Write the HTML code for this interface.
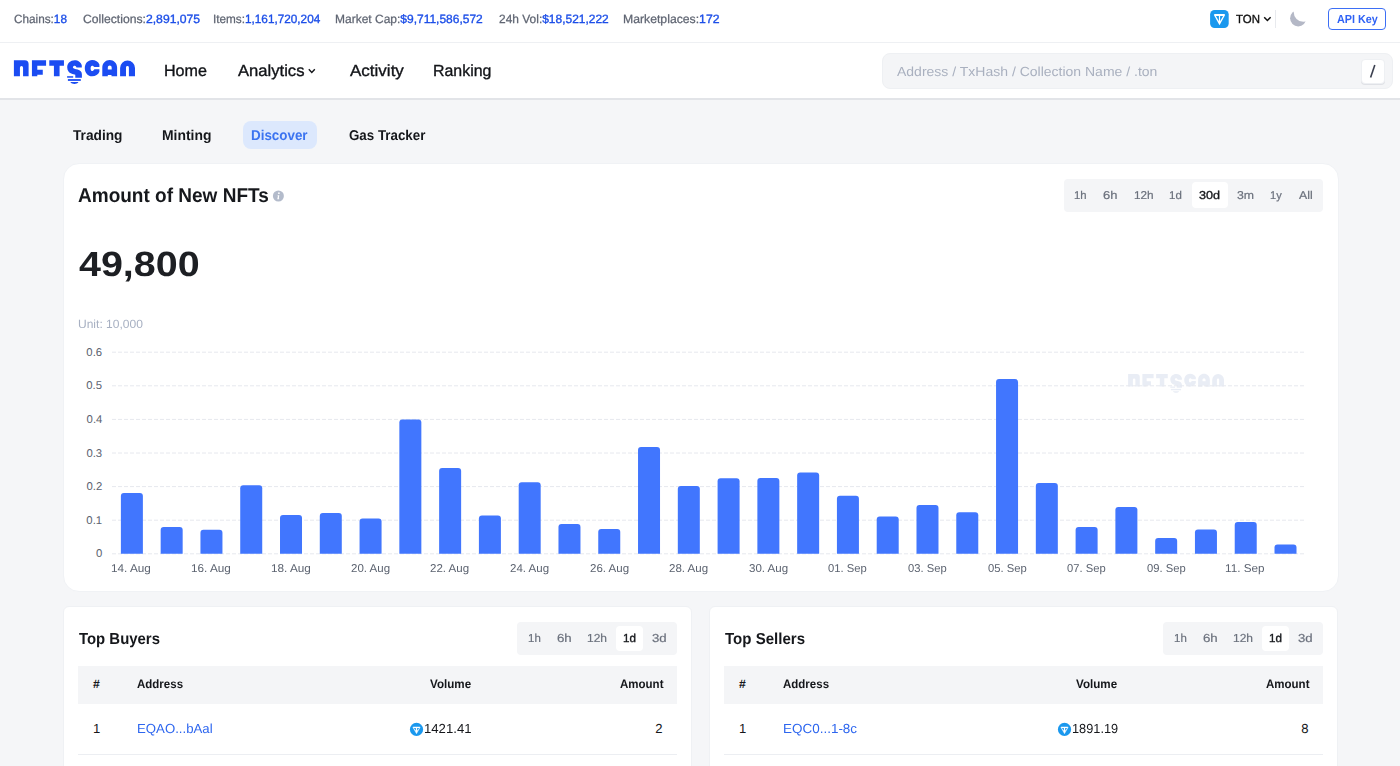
<!DOCTYPE html>
<html><head><meta charset="utf-8"><style>
html,body{margin:0;padding:0;}
body{width:1400px;height:766px;overflow:hidden;position:relative;background:#f5f6f8;font-family:"Liberation Sans",sans-serif;}
.tx{position:absolute;line-height:1;white-space:nowrap;text-rendering:geometricPrecision;}
.box{position:absolute;box-sizing:border-box;}
svg{position:absolute;left:0;top:0;overflow:visible;}
</style></head><body>
<div class="box" style="left:0;top:0;width:1400px;height:42px;background:#fff"></div>
<div class="box" style="left:0;top:42px;width:1400px;height:1px;background:#eef0f3"></div>
<div class="box" style="left:0;top:43px;width:1400px;height:55px;background:#fff"></div>
<div class="box" style="left:0;top:98px;width:1400px;height:1.5px;background:#e2e4e8"></div>
<div class="box" style="left:881.8px;top:52.6px;width:510.8px;height:36.4px;background:#f4f5f7;border:1px solid #eef0f3;border-radius:8px"></div>
<div class="box" style="left:1361.4px;top:59.4px;width:23.2px;height:24.3px;background:#fff;border:1px solid #eef0f3;border-radius:4px;box-shadow:0 1px 0 #dfe1e6"></div>
<div class="box" style="left:1328px;top:7.9px;width:58px;height:22.1px;border:1px solid #3d6ff5;border-radius:4px"></div>
<div class="box" style="left:1275px;top:9.9px;width:1px;height:18px;background:#e8eaee"></div>
<div class="box" style="left:242.6px;top:121.1px;width:74.5px;height:27.8px;background:#dce8fd;border-radius:8px"></div>
<div class="box" style="left:62.8px;top:163.2px;width:1275.9px;height:428.9px;background:#fff;border-radius:16px;border:1px solid #f0f2f5"></div>
<div class="box" style="left:1064.1px;top:179.1px;width:259.3px;height:32.8px;background:#f4f5f7;border-radius:4px"></div>
<div class="box" style="left:1191.6px;top:182.3px;width:36.1px;height:25.7px;background:#fff;border-radius:4px"></div>

<div class="box" style="left:62.6px;top:606.3px;width:629.9px;height:200px;background:#fff;border-radius:6px;border:1px solid #eff1f4"></div>
<div class="box" style="left:517.3px;top:622.2px;width:160.1px;height:32.8px;background:#f4f5f7;border-radius:4px"></div>
<div class="box" style="left:615.9px;top:625.5px;width:27px;height:25.9px;background:#fff;border-radius:4px"></div>
<div class="box" style="left:78px;top:666.4px;width:599.4px;height:37.4px;background:#f4f5f7"></div>
<div class="box" style="left:78px;top:754px;width:599.4px;height:1px;background:#eceef2"></div>


<div class="box" style="left:708.6px;top:606.3px;width:629.9px;height:200px;background:#fff;border-radius:6px;border:1px solid #eff1f4"></div>
<div class="box" style="left:1163.3px;top:622.2px;width:160.1px;height:32.8px;background:#f4f5f7;border-radius:4px"></div>
<div class="box" style="left:1261.9px;top:625.5px;width:27px;height:25.9px;background:#fff;border-radius:4px"></div>
<div class="box" style="left:724px;top:666.4px;width:599.4px;height:37.4px;background:#f4f5f7"></div>
<div class="box" style="left:724px;top:754px;width:599.4px;height:1px;background:#eceef2"></div>

<svg width="1400" height="766" viewBox="0 0 1400 766">
<defs>
<mask id="moon"><rect x="1280" y="0" width="40" height="40" fill="#fff"/><circle cx="1303.3" cy="12.1" r="9.6" fill="#000"/></mask></defs>
<g fill="#1b4cf2">
<path d="M13.9,76.15 V60.2 H24.8 A3.8,3.8 0 0 1 28.6,64 V76.15 H23.06 V67.63 A1.565,1.565 0 0 0 19.93,67.63 V76.15 Z"/>
<path d="M31.93,76.15 V60.2 H46.08 V65.64 H37.29 V69.63 H42.77 V74.86 H37.29 V76.15 Z"/>
<path d="M49.29,60.2 H63.95 V65.77 H59.58 V76.15 H53.92 V65.77 H49.29 Z"/>
<path d="M81.8,65.5 C81.0,62.3 78.2,60.3 74.6,60.3 C70.4,60.3 67.2,63.3 67.2,67.2 C67.2,70.3 68.9,72.6 71.3,73.6 C72.8,74.2 74.5,74.5 75.3,74.8 V77.8 H81.9 V74.2 C81.9,71.6 80.2,70.2 77.6,69.4 L75.0,68.9 C73.6,68.6 72.9,68.0 72.9,67.3 C72.9,66.4 73.8,65.8 74.7,65.8 C75.6,65.8 76.1,66.5 76.5,67.6 H81.8 Z"/>
<rect x="67.1" y="76.2" width="6.1" height="1.5"/>
<rect x="67.9" y="79.1" width="12.9" height="1.8"/>
<path d="M70.3,82 H78.5 C77.5,83.5 76,83.9 74.4,83.9 C72.8,83.9 71.3,83.5 70.3,82 Z"/>
<path d="M99.4,64.6 C98.2,61.8 95.5,60.1 92.1,60.1 C87.9,60.1 84.8,63.7 84.8,68.2 C84.8,72.7 87.9,76.3 92.1,76.3 C95.5,76.3 98.2,74.6 99.4,71.8 V69.2 H94.4 C93.6,70.3 93.0,71.0 92.2,71.0 C91.2,71.0 90.6,69.7 90.6,68.4 C90.6,67.1 91.2,65.8 92.2,65.8 C93.0,65.8 93.6,66.4 94.4,67.1 H99.4 Z"/>
<path fill-rule="evenodd" d="M102.3,76.3 V67.5 C102.3,63.4 105.6,60.1 109.7,60.1 C113.8,60.1 117.1,63.4 117.1,67.5 V76.3 H111.5 V75.0 H107.8 V76.3 Z M107.8,69.5 V67.8 C107.8,66.5 108.7,65.6 109.75,65.6 C110.8,65.6 111.7,66.5 111.7,67.8 V69.5 Z"/>
<path d="M120.1,76.2 V67.95 A7.45,7.45 0 0 1 135,67.95 V76.2 H128.9 V67.45 A1.45,1.45 0 0 0 126,67.45 V76.2 Z"/>
</g>
<g fill="#e9edf5" transform="translate(1117.1,326.2) scale(0.792)">
<path d="M13.9,76.15 V60.2 H24.8 A3.8,3.8 0 0 1 28.6,64 V76.15 H23.06 V67.63 A1.565,1.565 0 0 0 19.93,67.63 V76.15 Z"/>
<path d="M31.93,76.15 V60.2 H46.08 V65.64 H37.29 V69.63 H42.77 V74.86 H37.29 V76.15 Z"/>
<path d="M49.29,60.2 H63.95 V65.77 H59.58 V76.15 H53.92 V65.77 H49.29 Z"/>
<path d="M81.8,65.5 C81.0,62.3 78.2,60.3 74.6,60.3 C70.4,60.3 67.2,63.3 67.2,67.2 C67.2,70.3 68.9,72.6 71.3,73.6 C72.8,74.2 74.5,74.5 75.3,74.8 V77.8 H81.9 V74.2 C81.9,71.6 80.2,70.2 77.6,69.4 L75.0,68.9 C73.6,68.6 72.9,68.0 72.9,67.3 C72.9,66.4 73.8,65.8 74.7,65.8 C75.6,65.8 76.1,66.5 76.5,67.6 H81.8 Z"/>
<rect x="67.1" y="76.2" width="6.1" height="1.5"/>
<rect x="67.9" y="79.1" width="12.9" height="1.8"/>
<path d="M70.3,82 H78.5 C77.5,83.5 76,83.9 74.4,83.9 C72.8,83.9 71.3,83.5 70.3,82 Z"/>
<path d="M99.4,64.6 C98.2,61.8 95.5,60.1 92.1,60.1 C87.9,60.1 84.8,63.7 84.8,68.2 C84.8,72.7 87.9,76.3 92.1,76.3 C95.5,76.3 98.2,74.6 99.4,71.8 V69.2 H94.4 C93.6,70.3 93.0,71.0 92.2,71.0 C91.2,71.0 90.6,69.7 90.6,68.4 C90.6,67.1 91.2,65.8 92.2,65.8 C93.0,65.8 93.6,66.4 94.4,67.1 H99.4 Z"/>
<path fill-rule="evenodd" d="M102.3,76.3 V67.5 C102.3,63.4 105.6,60.1 109.7,60.1 C113.8,60.1 117.1,63.4 117.1,67.5 V76.3 H111.5 V75.0 H107.8 V76.3 Z M107.8,69.5 V67.8 C107.8,66.5 108.7,65.6 109.75,65.6 C110.8,65.6 111.7,66.5 111.7,67.8 V69.5 Z"/>
<path d="M120.1,76.2 V67.95 A7.45,7.45 0 0 1 135,67.95 V76.2 H128.9 V67.45 A1.45,1.45 0 0 0 126,67.45 V76.2 Z"/>
</g>
<g stroke="#e6e8ee" stroke-width="1" stroke-dasharray="4,2"><line x1="112" x2="1305" y1="553.8" y2="553.8"/><line x1="112" x2="1305" y1="520.2" y2="520.2"/><line x1="112" x2="1305" y1="486.6" y2="486.6"/><line x1="112" x2="1305" y1="453.0" y2="453.0"/><line x1="112" x2="1305" y1="419.4" y2="419.4"/><line x1="112" x2="1305" y1="385.8" y2="385.8"/><line x1="112" x2="1305" y1="352.2" y2="352.2"/></g>
<g fill="#4176fe"><path d="M120.89,553.8 V496.00 Q120.89,493.00 123.89,493.00 H139.89 Q142.89,493.00 142.89,496.00 V553.8 Z"/><path d="M160.67,553.8 V530.00 Q160.67,527.00 163.67,527.00 H179.67 Q182.67,527.00 182.67,530.00 V553.8 Z"/><path d="M200.45,553.8 V532.80 Q200.45,529.80 203.45,529.80 H219.45 Q222.45,529.80 222.45,532.80 V553.8 Z"/><path d="M240.23,553.8 V488.30 Q240.23,485.30 243.23,485.30 H259.23 Q262.23,485.30 262.23,488.30 V553.8 Z"/><path d="M280.01,553.8 V518.00 Q280.01,515.00 283.01,515.00 H299.01 Q302.01,515.00 302.01,518.00 V553.8 Z"/><path d="M319.79,553.8 V516.10 Q319.79,513.10 322.79,513.10 H338.79 Q341.79,513.10 341.79,516.10 V553.8 Z"/><path d="M359.57,553.8 V521.40 Q359.57,518.40 362.57,518.40 H378.57 Q381.57,518.40 381.57,521.40 V553.8 Z"/><path d="M399.35,553.8 V422.40 Q399.35,419.40 402.35,419.40 H418.35 Q421.35,419.40 421.35,422.40 V553.8 Z"/><path d="M439.13,553.8 V471.10 Q439.13,468.10 442.13,468.10 H458.13 Q461.13,468.10 461.13,471.10 V553.8 Z"/><path d="M478.91,553.8 V518.40 Q478.91,515.40 481.91,515.40 H497.91 Q500.91,515.40 500.91,518.40 V553.8 Z"/><path d="M518.69,553.8 V485.30 Q518.69,482.30 521.69,482.30 H537.69 Q540.69,482.30 540.69,485.30 V553.8 Z"/><path d="M558.47,553.8 V526.90 Q558.47,523.90 561.47,523.90 H577.47 Q580.47,523.90 580.47,526.90 V553.8 Z"/><path d="M598.25,553.8 V532.10 Q598.25,529.10 601.25,529.10 H617.25 Q620.25,529.10 620.25,532.10 V553.8 Z"/><path d="M638.03,553.8 V450.10 Q638.03,447.10 641.03,447.10 H657.03 Q660.03,447.10 660.03,450.10 V553.8 Z"/><path d="M677.81,553.8 V488.90 Q677.81,485.90 680.81,485.90 H696.81 Q699.81,485.90 699.81,488.90 V553.8 Z"/><path d="M717.59,553.8 V481.20 Q717.59,478.20 720.59,478.20 H736.59 Q739.59,478.20 739.59,481.20 V553.8 Z"/><path d="M757.37,553.8 V481.00 Q757.37,478.00 760.37,478.00 H776.37 Q779.37,478.00 779.37,481.00 V553.8 Z"/><path d="M797.15,553.8 V475.50 Q797.15,472.50 800.15,472.50 H816.15 Q819.15,472.50 819.15,475.50 V553.8 Z"/><path d="M836.93,553.8 V498.70 Q836.93,495.70 839.93,495.70 H855.93 Q858.93,495.70 858.93,498.70 V553.8 Z"/><path d="M876.71,553.8 V519.40 Q876.71,516.40 879.71,516.40 H895.71 Q898.71,516.40 898.71,519.40 V553.8 Z"/><path d="M916.49,553.8 V508.10 Q916.49,505.10 919.49,505.10 H935.49 Q938.49,505.10 938.49,508.10 V553.8 Z"/><path d="M956.27,553.8 V515.20 Q956.27,512.20 959.27,512.20 H975.27 Q978.27,512.20 978.27,515.20 V553.8 Z"/><path d="M996.05,553.8 V382.10 Q996.05,379.10 999.05,379.10 H1015.05 Q1018.05,379.10 1018.05,382.10 V553.8 Z"/><path d="M1035.83,553.8 V486.10 Q1035.83,483.10 1038.83,483.10 H1054.83 Q1057.83,483.10 1057.83,486.10 V553.8 Z"/><path d="M1075.61,553.8 V530.10 Q1075.61,527.10 1078.61,527.10 H1094.61 Q1097.61,527.10 1097.61,530.10 V553.8 Z"/><path d="M1115.39,553.8 V509.90 Q1115.39,506.90 1118.39,506.90 H1134.39 Q1137.39,506.90 1137.39,509.90 V553.8 Z"/><path d="M1155.17,553.8 V541.00 Q1155.17,538.00 1158.17,538.00 H1174.17 Q1177.17,538.00 1177.17,541.00 V553.8 Z"/><path d="M1194.95,553.8 V532.40 Q1194.95,529.40 1197.95,529.40 H1213.95 Q1216.95,529.40 1216.95,532.40 V553.8 Z"/><path d="M1234.73,553.8 V524.90 Q1234.73,521.90 1237.73,521.90 H1253.73 Q1256.73,521.90 1256.73,524.90 V553.8 Z"/><path d="M1274.51,553.8 V547.40 Q1274.51,544.40 1277.51,544.40 H1293.51 Q1296.51,544.40 1296.51,547.40 V553.8 Z"/></g>
<path d="M308.8,69.2 L311.8,72.4 L314.8,69.2" fill="none" stroke="#121418" stroke-width="1.4"/>
<path d="M1264.2,17.2 L1267.4,20.5 L1270.6,17.2" fill="none" stroke="#111" stroke-width="1.5"/>
<circle cx="1298.2" cy="18.3" r="8.1" fill="#b4b8c6" mask="url(#moon)"/>
<rect x="1210.1" y="9.9" width="18.6" height="18.2" rx="4.5" fill="#1a98ee"/>
<path d="M1213.9,15.1 Q1213.9,14.0 1215.0,14.0 H1224.0 Q1225.1,14.0 1225.1,15.1 L1219.5,25.3 Z" fill="#fff"/>
<path d="M1215.9,16.0 H1218.9 V21.3 Z M1220.1,16.0 H1223.1 L1220.1,21.3 Z" fill="#1a98ee"/>
<line x1="1374.8" y1="65" x2="1370.6" y2="77.4" stroke="#3b4050" stroke-width="1.6"/>
<circle cx="278.4" cy="196" r="5.5" fill="#b3bbcb"/>
<path d="M277.6,195.2 H279.3 L278.8,198.6 H279.2 V199.2 H277.3 L277.9,196.0 H277.6 Z" fill="#fff"/><circle cx="278.9" cy="193.2" r="0.85" fill="#fff"/>
<circle cx="416.5" cy="729.4" r="6.6" fill="#1a98ee"/><path d="M412.90,727.10 H420.10 L416.50,733.60 Z" fill="#fff" stroke="#fff" stroke-width="0.6" stroke-linejoin="round"/><path d="M413.90,727.90 H415.85 V730.80 Z M417.15,727.90 H419.10 L417.15,730.80 Z" fill="#1a98ee"/>
<circle cx="1064.5" cy="729.4" r="6.6" fill="#1a98ee"/><path d="M1060.90,727.10 H1068.10 L1064.50,733.60 Z" fill="#fff" stroke="#fff" stroke-width="0.6" stroke-linejoin="round"/><path d="M1061.90,727.90 H1063.85 V730.80 Z M1065.15,727.90 H1067.10 L1065.15,730.80 Z" fill="#1a98ee"/>
</svg>
<div id="tb1" class="tx" style="left:14.14px;top:12.81px;font-size:12px;font-weight:400;color:#606673;letter-spacing:0.000px;transform:scaleX(0.9797);transform-origin:0 0;-webkit-text-stroke:0.25px currentColor;"><span style="color:#606673">Chains:</span><span style="color:#1d4fe8;-webkit-text-stroke:0.35px currentColor">18</span></div>
<div id="tb2" class="tx" style="left:82.56px;top:12.81px;font-size:12px;font-weight:400;color:#606673;letter-spacing:0.000px;transform:scaleX(1.0149);transform-origin:0 0;-webkit-text-stroke:0.25px currentColor;"><span style="color:#606673">Collections:</span><span style="color:#1d4fe8;-webkit-text-stroke:0.35px currentColor">2,891,075</span></div>
<div id="tb3" class="tx" style="left:213.34px;top:12.81px;font-size:12px;font-weight:400;color:#606673;letter-spacing:0.000px;transform:scaleX(0.9800);transform-origin:0 0;-webkit-text-stroke:0.25px currentColor;"><span style="color:#606673">Items:</span><span style="color:#1d4fe8;-webkit-text-stroke:0.35px currentColor">1,161,720,204</span></div>
<div id="tb4" class="tx" style="left:335.37px;top:12.81px;font-size:12px;font-weight:400;color:#606673;letter-spacing:0.000px;transform:scaleX(0.9993);transform-origin:0 0;-webkit-text-stroke:0.25px currentColor;"><span style="color:#606673">Market Cap:</span><span style="color:#1d4fe8;-webkit-text-stroke:0.35px currentColor">$9,711,586,572</span></div>
<div id="tb5" class="tx" style="left:498.52px;top:12.81px;font-size:12px;font-weight:400;color:#606673;letter-spacing:0.000px;transform:scaleX(0.9963);transform-origin:0 0;-webkit-text-stroke:0.25px currentColor;"><span style="color:#606673">24h Vol:</span><span style="color:#1d4fe8;-webkit-text-stroke:0.35px currentColor">$18,521,222</span></div>
<div id="tb6" class="tx" style="left:622.76px;top:12.81px;font-size:12px;font-weight:400;color:#606673;letter-spacing:0.000px;transform:scaleX(1.0189);transform-origin:0 0;-webkit-text-stroke:0.25px currentColor;"><span style="color:#606673">Marketplaces:</span><span style="color:#1d4fe8;-webkit-text-stroke:0.35px currentColor">172</span></div>
<div id="nv1" class="tx" style="left:164.36px;top:62.91px;font-size:16.1px;font-weight:400;color:#121418;letter-spacing:0.000px;transform:scaleX(0.9996);transform-origin:0 0;-webkit-text-stroke:0.35px currentColor;">Home</div>
<div id="nv2" class="tx" style="left:237.54px;top:62.91px;font-size:16.1px;font-weight:400;color:#121418;letter-spacing:0.000px;transform:scaleX(1.0320);transform-origin:0 0;-webkit-text-stroke:0.35px currentColor;">Analytics</div>
<div id="nv3" class="tx" style="left:349.64px;top:62.91px;font-size:16.1px;font-weight:400;color:#121418;letter-spacing:0.000px;transform:scaleX(1.0570);transform-origin:0 0;-webkit-text-stroke:0.35px currentColor;">Activity</div>
<div id="nv4" class="tx" style="left:433.32px;top:62.91px;font-size:16.1px;font-weight:400;color:#121418;letter-spacing:0.000px;transform:scaleX(0.9896);transform-origin:0 0;-webkit-text-stroke:0.35px currentColor;">Ranking</div>
<div id="ph" class="tx" style="left:897.42px;top:65.01px;font-size:13.15px;font-weight:400;color:#a9b0bf;letter-spacing:0.000px;transform:scaleX(1.0652);transform-origin:0 0;">Address / TxHash / Collection Name / .ton</div>
<div id="ton" class="tx" style="left:1236.41px;top:13.71px;font-size:11.8px;font-weight:400;color:#111;letter-spacing:0.000px;transform:scaleX(0.9691);transform-origin:0 0;-webkit-text-stroke:0.35px currentColor;">TON</div>
<div id="api" class="tx" style="left:1336.56px;top:13.81px;font-size:11.8px;font-weight:700;color:#2f62f5;letter-spacing:0.000px;transform:scaleX(0.9154);transform-origin:0 0;">API Key</div>
<div id="tab1" class="tx" style="left:72.57px;top:128.76px;font-size:14.2px;font-weight:700;color:#15171b;letter-spacing:0.000px;transform:scaleX(0.9656);transform-origin:0 0;">Trading</div>
<div id="tab2" class="tx" style="left:161.89px;top:128.76px;font-size:14.2px;font-weight:700;color:#15171b;letter-spacing:0.000px;transform:scaleX(0.9791);transform-origin:0 0;">Minting</div>
<div id="tab3" class="tx" style="left:251.44px;top:128.76px;font-size:14.2px;font-weight:700;color:#3b73f0;letter-spacing:0.000px;transform:scaleX(0.9439);transform-origin:0 0;">Discover</div>
<div id="tab4" class="tx" style="left:349.24px;top:128.76px;font-size:14.2px;font-weight:700;color:#15171b;letter-spacing:0.000px;transform:scaleX(0.9401);transform-origin:0 0;">Gas Tracker</div>
<div id="ttl" class="tx" style="left:78.20px;top:185.81px;font-size:20px;font-weight:700;color:#16181c;letter-spacing:0.000px;transform:scaleX(0.9506);transform-origin:0 0;">Amount of New NFTs</div>
<div id="big" class="tx" style="left:78.91px;top:247.01px;font-size:35px;font-weight:700;color:#1d1f23;letter-spacing:0.000px;transform:scaleX(1.1265);transform-origin:0 0;">49,800</div>
<div id="unit" class="tx" style="left:77.98px;top:318.50px;font-size:11.9px;font-weight:400;color:#a7b0c2;letter-spacing:0.000px;transform:scaleX(1.0114);transform-origin:0 0;">Unit: 10,000</div>
<div id="tr0" class="tx" style="left:1074.22px;top:190.91px;font-size:11.4px;font-weight:400;color:#6b717d;letter-spacing:0.000px;transform:scaleX(0.9928);transform-origin:0 0;-webkit-text-stroke:0.2px currentColor;">1h</div>
<div id="tr1" class="tx" style="left:1103.30px;top:190.91px;font-size:11.4px;font-weight:400;color:#6b717d;letter-spacing:0.000px;transform:scaleX(1.1376);transform-origin:0 0;-webkit-text-stroke:0.2px currentColor;">6h</div>
<div id="tr2" class="tx" style="left:1133.65px;top:190.91px;font-size:11.4px;font-weight:400;color:#6b717d;letter-spacing:0.000px;transform:scaleX(1.0352);transform-origin:0 0;-webkit-text-stroke:0.2px currentColor;">12h</div>
<div id="tr3" class="tx" style="left:1169.29px;top:190.91px;font-size:11.4px;font-weight:400;color:#6b717d;letter-spacing:0.000px;transform:scaleX(1.0097);transform-origin:0 0;-webkit-text-stroke:0.2px currentColor;">1d</div>
<div id="tr4" class="tx" style="left:1198.87px;top:190.91px;font-size:11.4px;font-weight:400;color:#17191d;letter-spacing:0.000px;transform:scaleX(1.1050);transform-origin:0 0;-webkit-text-stroke:0.35px currentColor;">30d</div>
<div id="tr5" class="tx" style="left:1237.26px;top:190.91px;font-size:11.4px;font-weight:400;color:#6b717d;letter-spacing:0.000px;transform:scaleX(1.0782);transform-origin:0 0;-webkit-text-stroke:0.2px currentColor;">3m</div>
<div id="tr6" class="tx" style="left:1270.33px;top:190.91px;font-size:11.4px;font-weight:400;color:#6b717d;letter-spacing:0.000px;transform:scaleX(0.9727);transform-origin:0 0;-webkit-text-stroke:0.2px currentColor;">1y</div>
<div id="tr7" class="tx" style="left:1299.28px;top:190.91px;font-size:11.4px;font-weight:400;color:#6b717d;letter-spacing:0.000px;transform:scaleX(1.0792);transform-origin:0 0;-webkit-text-stroke:0.2px currentColor;">All</div>
<div id="yl0" class="tx" style="right:1297.74px;top:549.35px;font-size:11.35px;font-weight:400;color:#5c6370;letter-spacing:0.000px;transform:scaleX(1.0000);transform-origin:0 0;">0</div>
<div id="yl1" class="tx" style="right:1297.87px;top:515.75px;font-size:11.35px;font-weight:400;color:#5c6370;letter-spacing:0.000px;transform:scaleX(1.0000);transform-origin:0 0;">0.1</div>
<div id="yl2" class="tx" style="right:1297.69px;top:482.15px;font-size:11.35px;font-weight:400;color:#5c6370;letter-spacing:0.000px;transform:scaleX(1.0000);transform-origin:0 0;">0.2</div>
<div id="yl3" class="tx" style="right:1297.85px;top:448.57px;font-size:11.35px;font-weight:400;color:#5c6370;letter-spacing:0.000px;transform:scaleX(1.0000);transform-origin:0 0;">0.3</div>
<div id="yl4" class="tx" style="right:1297.61px;top:414.97px;font-size:11.35px;font-weight:400;color:#5c6370;letter-spacing:0.000px;transform:scaleX(1.0000);transform-origin:0 0;">0.4</div>
<div id="yl5" class="tx" style="right:1297.91px;top:381.35px;font-size:11.35px;font-weight:400;color:#5c6370;letter-spacing:0.000px;transform:scaleX(1.0000);transform-origin:0 0;">0.5</div>
<div id="yl6" class="tx" style="right:1297.89px;top:347.75px;font-size:11.35px;font-weight:400;color:#5c6370;letter-spacing:0.000px;transform:scaleX(1.0000);transform-origin:0 0;">0.6</div>
<div id="xl0" class="tx" style="left:111.44px;top:563.81px;font-size:11.4px;font-weight:400;color:#5c6370;letter-spacing:0.000px;transform:scaleX(1.0326);transform-origin:0 0;">14. Aug</div>
<div id="xl1" class="tx" style="left:191.33px;top:563.81px;font-size:11.4px;font-weight:400;color:#5c6370;letter-spacing:0.000px;transform:scaleX(1.0326);transform-origin:0 0;">16. Aug</div>
<div id="xl2" class="tx" style="left:270.83px;top:563.81px;font-size:11.4px;font-weight:400;color:#5c6370;letter-spacing:0.000px;transform:scaleX(1.0326);transform-origin:0 0;">18. Aug</div>
<div id="xl3" class="tx" style="left:351.05px;top:563.81px;font-size:11.4px;font-weight:400;color:#5c6370;letter-spacing:0.000px;transform:scaleX(1.0110);transform-origin:0 0;">20. Aug</div>
<div id="xl4" class="tx" style="left:430.43px;top:563.81px;font-size:11.4px;font-weight:400;color:#5c6370;letter-spacing:0.000px;transform:scaleX(1.0113);transform-origin:0 0;">22. Aug</div>
<div id="xl5" class="tx" style="left:510.35px;top:563.81px;font-size:11.4px;font-weight:400;color:#5c6370;letter-spacing:0.000px;transform:scaleX(1.0107);transform-origin:0 0;">24. Aug</div>
<div id="xl6" class="tx" style="left:589.83px;top:563.81px;font-size:11.4px;font-weight:400;color:#5c6370;letter-spacing:0.000px;transform:scaleX(1.0113);transform-origin:0 0;">26. Aug</div>
<div id="xl7" class="tx" style="left:669.23px;top:563.81px;font-size:11.4px;font-weight:400;color:#5c6370;letter-spacing:0.000px;transform:scaleX(1.0113);transform-origin:0 0;">28. Aug</div>
<div id="xl8" class="tx" style="left:748.79px;top:563.81px;font-size:11.4px;font-weight:400;color:#5c6370;letter-spacing:0.000px;transform:scaleX(1.0114);transform-origin:0 0;">30. Aug</div>
<div id="xl9" class="tx" style="left:828.40px;top:563.81px;font-size:11.4px;font-weight:400;color:#5c6370;letter-spacing:0.000px;transform:scaleX(0.9862);transform-origin:0 0;">01. Sep</div>
<div id="xl10" class="tx" style="left:908.39px;top:563.81px;font-size:11.4px;font-weight:400;color:#5c6370;letter-spacing:0.000px;transform:scaleX(0.9836);transform-origin:0 0;">03. Sep</div>
<div id="xl11" class="tx" style="left:987.67px;top:563.81px;font-size:11.4px;font-weight:400;color:#5c6370;letter-spacing:0.000px;transform:scaleX(0.9871);transform-origin:0 0;">05. Sep</div>
<div id="xl12" class="tx" style="left:1067.20px;top:563.81px;font-size:11.4px;font-weight:400;color:#5c6370;letter-spacing:0.000px;transform:scaleX(0.9832);transform-origin:0 0;">07. Sep</div>
<div id="xl13" class="tx" style="left:1146.69px;top:563.81px;font-size:11.4px;font-weight:400;color:#5c6370;letter-spacing:0.000px;transform:scaleX(0.9835);transform-origin:0 0;">09. Sep</div>
<div id="xl14" class="tx" style="left:1225.38px;top:563.81px;font-size:11.4px;font-weight:400;color:#5c6370;letter-spacing:0.000px;transform:scaleX(1.0296);transform-origin:0 0;">11. Sep</div>
<div id="bt" class="tx" style="left:79.10px;top:631.71px;font-size:15.9px;font-weight:700;color:#15171b;letter-spacing:0.000px;transform:scaleX(0.9385);transform-origin:0 0;">Top Buyers</div>
<div id="br0" class="tx" style="left:528.46px;top:633.01px;font-size:11.6px;font-weight:400;color:#6b717d;letter-spacing:0.000px;transform:scaleX(0.9888);transform-origin:0 0;-webkit-text-stroke:0.2px currentColor;">1h</div>
<div id="br1" class="tx" style="left:556.75px;top:633.01px;font-size:11.6px;font-weight:400;color:#6b717d;letter-spacing:0.000px;transform:scaleX(1.1437);transform-origin:0 0;-webkit-text-stroke:0.2px currentColor;">6h</div>
<div id="br2" class="tx" style="left:586.94px;top:633.01px;font-size:11.6px;font-weight:400;color:#6b717d;letter-spacing:0.000px;transform:scaleX(1.0347);transform-origin:0 0;-webkit-text-stroke:0.2px currentColor;">12h</div>
<div id="br3" class="tx" style="left:623.20px;top:633.01px;font-size:11.6px;font-weight:400;color:#17191d;letter-spacing:0.000px;transform:scaleX(1.0030);transform-origin:0 0;-webkit-text-stroke:0.35px currentColor;">1d</div>
<div id="br4" class="tx" style="left:652.21px;top:633.01px;font-size:11.6px;font-weight:400;color:#6b717d;letter-spacing:0.000px;transform:scaleX(1.1399);transform-origin:0 0;-webkit-text-stroke:0.2px currentColor;">3d</div>
<div id="bh1" class="tx" style="left:93.09px;top:678.32px;font-size:12.2px;font-weight:700;color:#15171b;letter-spacing:0.000px;transform:scaleX(1.0000);transform-origin:0 0;">#</div>
<div id="bh2" class="tx" style="left:137.46px;top:678.32px;font-size:12.2px;font-weight:700;color:#15171b;letter-spacing:0.000px;transform:scaleX(0.9441);transform-origin:0 0;">Address</div>
<div id="bh3" class="tx" style="left:430.49px;top:678.32px;font-size:12.2px;font-weight:700;color:#15171b;letter-spacing:0.000px;transform:scaleX(0.9537);transform-origin:0 0;">Volume</div>
<div id="bh4" class="tx" style="left:619.54px;top:678.32px;font-size:12.2px;font-weight:700;color:#15171b;letter-spacing:0.000px;transform:scaleX(0.9446);transform-origin:0 0;">Amount</div>
<div id="bc1" class="tx" style="left:92.98px;top:722.00px;font-size:13.1px;font-weight:400;color:#15171b;letter-spacing:0.000px;transform:scaleX(1.0000);transform-origin:0 0;">1</div>
<div id="bc2" class="tx" style="left:136.75px;top:722.00px;font-size:13.1px;font-weight:400;color:#2d66ef;letter-spacing:0.000px;transform:scaleX(1.0081);transform-origin:0 0;">EQAO...bAal</div>
<div id="bc3" class="tx" style="left:424.44px;top:722.00px;font-size:13.1px;font-weight:400;color:#15171b;letter-spacing:0.000px;transform:scaleX(1.0035);transform-origin:0 0;">1421.41</div>
<div id="bc4" class="tx" style="right:737.38px;top:722.00px;font-size:13.1px;font-weight:400;color:#15171b;letter-spacing:0.000px;transform:scaleX(1.0000);transform-origin:0 0;">2</div>
<div id="st" class="tx" style="left:725.10px;top:631.71px;font-size:15.9px;font-weight:700;color:#15171b;letter-spacing:0.000px;transform:scaleX(0.9469);transform-origin:0 0;">Top Sellers</div>
<div id="sr0" class="tx" style="left:1174.46px;top:633.01px;font-size:11.6px;font-weight:400;color:#6b717d;letter-spacing:0.000px;transform:scaleX(0.9888);transform-origin:0 0;-webkit-text-stroke:0.2px currentColor;">1h</div>
<div id="sr1" class="tx" style="left:1202.75px;top:633.01px;font-size:11.6px;font-weight:400;color:#6b717d;letter-spacing:0.000px;transform:scaleX(1.1437);transform-origin:0 0;-webkit-text-stroke:0.2px currentColor;">6h</div>
<div id="sr2" class="tx" style="left:1232.94px;top:633.01px;font-size:11.6px;font-weight:400;color:#6b717d;letter-spacing:0.000px;transform:scaleX(1.0347);transform-origin:0 0;-webkit-text-stroke:0.2px currentColor;">12h</div>
<div id="sr3" class="tx" style="left:1269.20px;top:633.01px;font-size:11.6px;font-weight:400;color:#17191d;letter-spacing:0.000px;transform:scaleX(1.0030);transform-origin:0 0;-webkit-text-stroke:0.35px currentColor;">1d</div>
<div id="sr4" class="tx" style="left:1298.21px;top:633.01px;font-size:11.6px;font-weight:400;color:#6b717d;letter-spacing:0.000px;transform:scaleX(1.1399);transform-origin:0 0;-webkit-text-stroke:0.2px currentColor;">3d</div>
<div id="sh1" class="tx" style="left:739.09px;top:678.32px;font-size:12.2px;font-weight:700;color:#15171b;letter-spacing:0.000px;transform:scaleX(1.0000);transform-origin:0 0;">#</div>
<div id="sh2" class="tx" style="left:783.46px;top:678.32px;font-size:12.2px;font-weight:700;color:#15171b;letter-spacing:0.000px;transform:scaleX(0.9441);transform-origin:0 0;">Address</div>
<div id="sh3" class="tx" style="left:1076.49px;top:678.32px;font-size:12.2px;font-weight:700;color:#15171b;letter-spacing:0.000px;transform:scaleX(0.9537);transform-origin:0 0;">Volume</div>
<div id="sh4" class="tx" style="left:1265.54px;top:678.32px;font-size:12.2px;font-weight:700;color:#15171b;letter-spacing:0.000px;transform:scaleX(0.9446);transform-origin:0 0;">Amount</div>
<div id="sc1" class="tx" style="left:738.98px;top:722.00px;font-size:13.1px;font-weight:400;color:#15171b;letter-spacing:0.000px;transform:scaleX(1.0000);transform-origin:0 0;">1</div>
<div id="sc2" class="tx" style="left:782.67px;top:722.00px;font-size:13.1px;font-weight:400;color:#2d66ef;letter-spacing:0.000px;transform:scaleX(1.0283);transform-origin:0 0;">EQC0...1-8c</div>
<div id="sc3" class="tx" style="left:1071.68px;top:722.00px;font-size:13.1px;font-weight:400;color:#15171b;letter-spacing:0.000px;transform:scaleX(0.9756);transform-origin:0 0;">1891.19</div>
<div id="sc4" class="tx" style="right:91.41px;top:722.00px;font-size:13.1px;font-weight:400;color:#15171b;letter-spacing:0.000px;transform:scaleX(1.0000);transform-origin:0 0;">8</div>
</body></html>
